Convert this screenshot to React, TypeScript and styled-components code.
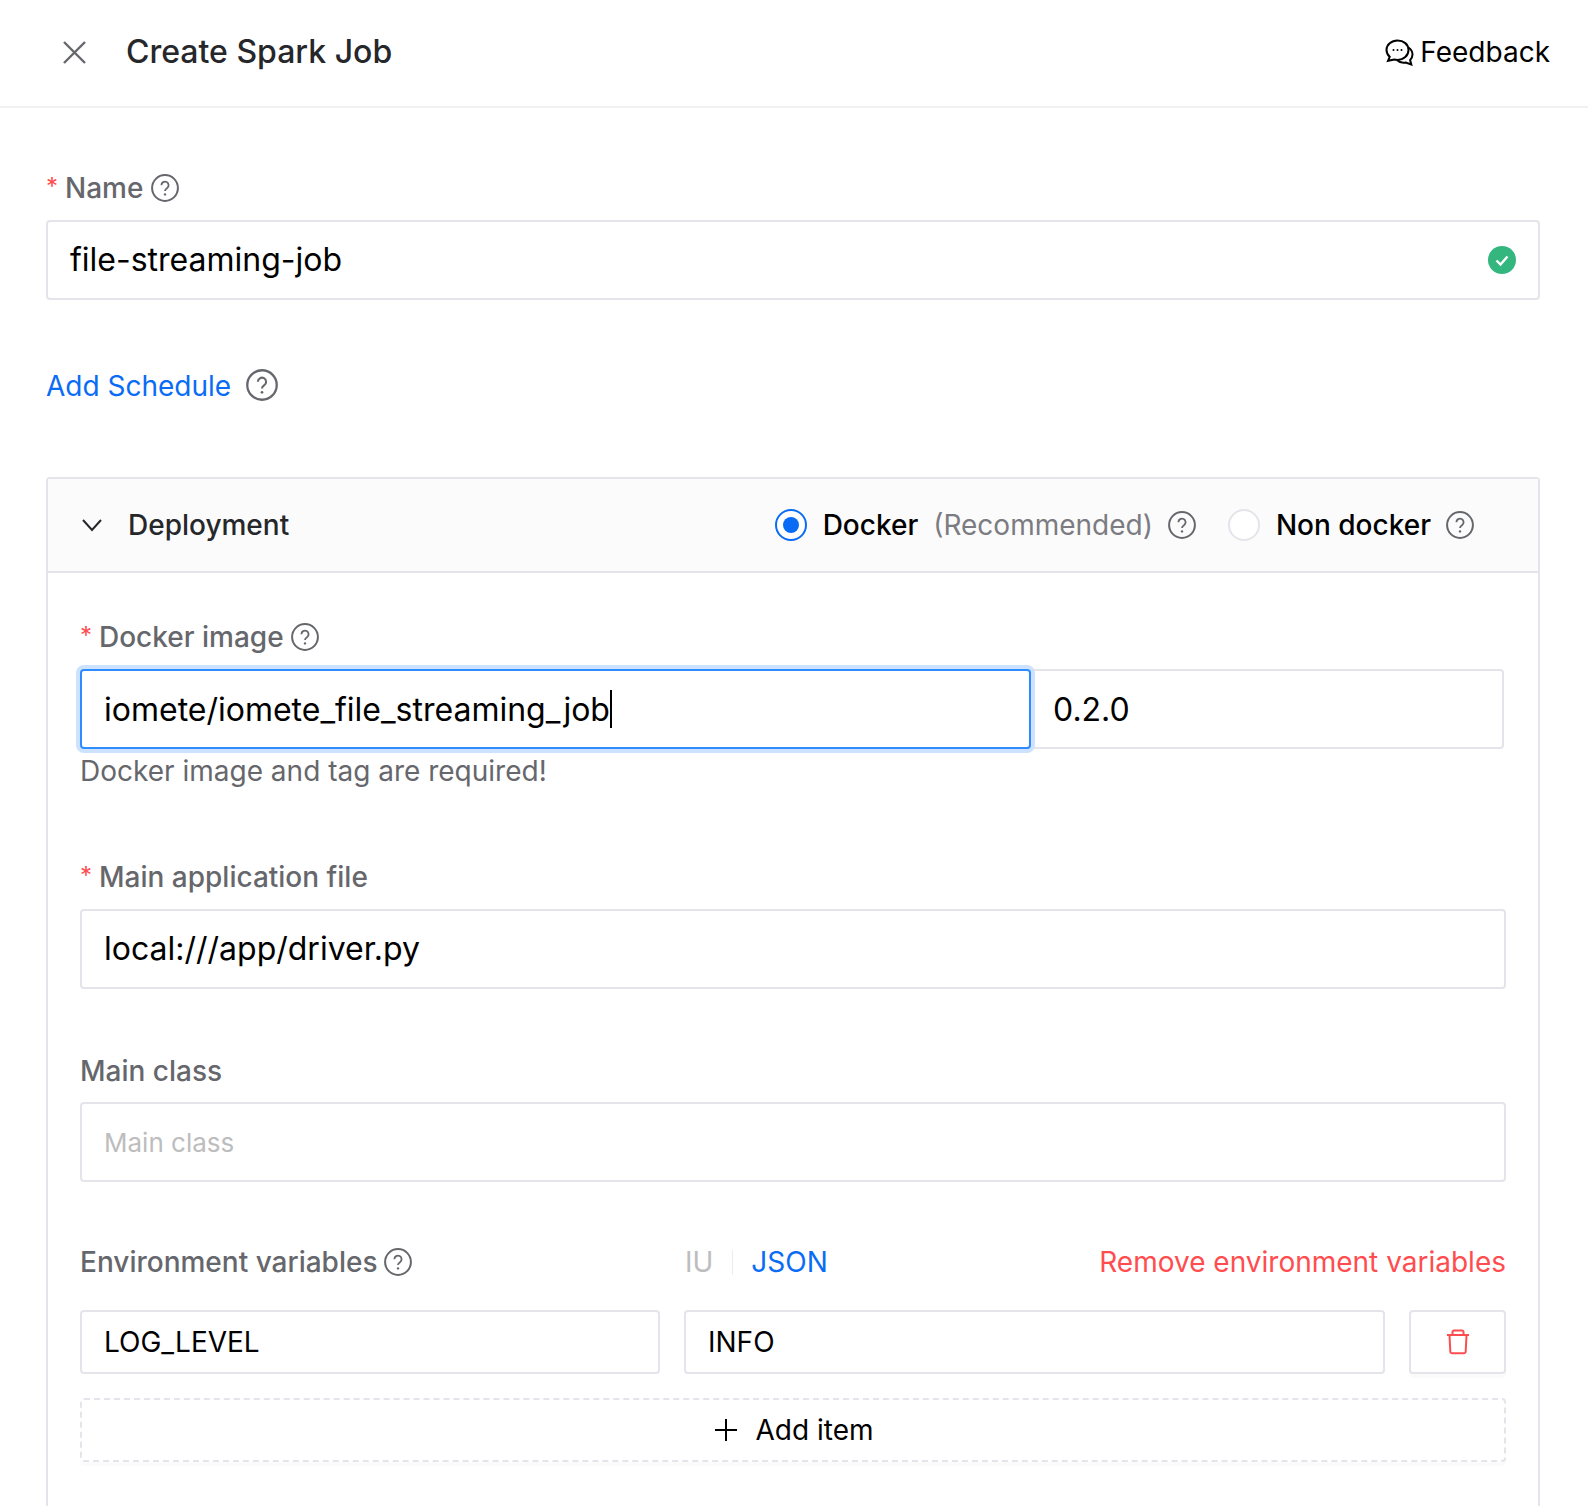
import React from 'react'
import styled, { createGlobalStyle } from 'styled-components'

const GlobalStyle = createGlobalStyle`
  html, body {
    margin: 0;
    padding: 0;
    height: 1506px;
    overflow: hidden;
    background: #fff;
    font-family: Inter, "Liberation Sans", sans-serif;
    color: #000;
  }
`

const TopBar = styled.header`
  display: flex;
  align-items: center;
  height: 104px;
  padding: 0 38px 2px 63px;
  border-bottom: 2px solid #f1f1f3;
`

const CloseIcon = styled.svg`
  width: 23px;
  height: 23px;
  margin-right: 40px;
  color: #66676c;
`

const Title = styled.h1`
  flex: 1;
  margin: 0;
  font-size: 32px;
  line-height: 40px;
  font-weight: 500;
  color: #26272b;
`

const FeedbackLink = styled.div`
  display: flex;
  align-items: center;
  gap: 6px;
  font-size: 28px;
  line-height: 40px;
`

const Form = styled.main`
  padding: 60px 48px 0 46px;
`

const LabelRow = styled.div<{ $mt?: number }>`
  display: flex;
  align-items: center;
  height: 40px;
  margin-top: ${p => p.$mt ?? 0}px;
  font-size: 28px;
  font-weight: 500;
  color: #66676c;
`

const Star = styled.span`
  width: 19px;
  font-size: 24px;
  font-weight: 400;
  color: #ff4d4f;
  position: relative;
  top: -2px;
`

const Help = styled.svg<{ $size?: number; $ml?: number; $up?: boolean }>`
  flex: none;
  width: ${p => p.$size ?? 28}px;
  height: ${p => p.$size ?? 28}px;
  margin-left: ${p => p.$ml ?? 8}px;
  margin-bottom: ${p => (p.$up ? 2 : 0)}px;
  color: #66676c;
`

const TextBox = styled.div<{ $h?: number; $mt?: number; $w?: string; $small?: boolean; $lift?: boolean }>`
  box-sizing: border-box;
  display: flex;
  align-items: center;
  justify-content: space-between;
  width: ${p => p.$w ?? 'auto'};
  height: ${p => p.$h ?? 80}px;
  margin-top: ${p => p.$mt ?? 12}px;
  padding: 0 22px ${p => (p.$lift ? 2 : 0)}px;
  background: #fff;
  border: 2px solid #e4e4ea;
  border-radius: 4px;
  font-size: ${p => (p.$small ? 28 : 32)}px;
  white-space: nowrap;
`

const StatusIcon = styled.svg`
  margin-bottom: -2px;
`

const Placeholder = styled.span`
  font-size: 26px;
  color: #bdbdbd;
`

const LinkText = styled.span`
  color: #0a6cf5;
  font-weight: 400;
`

const ScheduleRow = styled.div`
  display: flex;
  align-items: center;
  height: 40px;
  margin-top: 66px;
  font-size: 28px;
`

const Panel = styled.section`
  margin-top: 71px;
  height: 1100px;
  border: 2px solid #e4e4ea;
  border-radius: 4px;
`

const PanelHeader = styled.div`
  display: flex;
  align-items: center;
  box-sizing: border-box;
  height: 94px;
  padding: 0 0 0 34px;
  background: #fbfbfc;
  border-bottom: 2px solid #e4e4ea;
`

const Chevron = styled.svg`
  width: 20px;
  height: 14px;
  margin-right: 26px;
  color: #26272b;
`

const PanelTitle = styled.div`
  flex: 1;
  font-size: 28px;
  font-weight: 500;
  color: #26272b;
`

const RadioOption = styled.div<{ $mr?: number }>`
  display: flex;
  align-items: center;
  margin-right: ${p => p.$mr ?? 0}px;
  font-size: 28px;
  font-weight: 500;
`

const RadioDot = styled.span<{ $on?: boolean }>`
  box-sizing: border-box;
  display: flex;
  align-items: center;
  justify-content: center;
  width: 32px;
  height: 32px;
  margin-right: 16px;
  background: #fff;
  border: 2px solid ${p => (p.$on ? '#0a6cf5' : '#e4e4ea')};
  border-radius: 50%;

  &::after {
    content: '';
    display: ${p => (p.$on ? 'block' : 'none')};
    width: 16px;
    height: 16px;
    border-radius: 50%;
    background: #0a6cf5;
  }
`

const Muted = styled.span`
  margin-left: 15px;
  font-weight: 400;
  color: #7b7c81;
`

const PanelBody = styled.div`
  padding: 44px 32px 0;
`

const ImageRow = styled.div`
  display: flex;
  margin-top: 12px;
  margin-right: 2px;
`

const ImageInput = styled(TextBox)`
  justify-content: flex-start;
  width: 951px;
  margin-top: 0;
  border-color: #2f8cff;
  box-shadow: 0 0 0 4px #cce2ff;
  position: relative;
  z-index: 1;
`

const TagInput = styled(TextBox)`
  flex: 1;
  margin-top: 0;
  border-left: none;
`

const Caret = styled.span`
  width: 2px;
  height: 38px;
  background: #000;
`

const HintText = styled.div`
  height: 40px;
  margin-top: 2px;
  line-height: 40px;
  font-size: 28px;
  color: #66676c;
`

const EnvHeader = styled(LabelRow)`
  justify-content: space-between;
  margin-top: 60px;
`

const EnvLabel = styled.div`
  display: flex;
  align-items: center;
  width: 605px;
`

const ModeSwitch = styled.div`
  display: flex;
  align-items: center;
  flex: 1;
  font-weight: 400;
`

const ModeOff = styled.span`
  color: #bdbdbd;
`

const ModeDivider = styled.span`
  width: 1px;
  height: 25px;
  margin: 0 18px 0 19px;
  background: #ececef;
`

const RemoveText = styled.span`
  font-weight: 400;
  color: #ff4d4f;
`

const EnvRow = styled.div`
  display: flex;
  gap: 24px;
  margin-top: 28px;
`

const DeleteButton = styled.button`
  box-sizing: border-box;
  display: flex;
  flex: 1;
  align-items: center;
  justify-content: center;
  height: 64px;
  padding: 0;
  background: #fff;
  border: 2px solid #e4e4ea;
  border-radius: 4px;
  box-shadow: 0 4px 0 rgba(0, 0, 0, 0.015);
  color: #ff4d4f;
`

const AddItem = styled.button`
  box-sizing: border-box;
  display: flex;
  align-items: center;
  justify-content: center;
  gap: 18px;
  width: 100%;
  height: 64px;
  margin-top: 24px;
  padding: 0 0 0 3px;
  background: #fff;
  border: 2px dashed #e4e4ea;
  border-radius: 4px;
  box-shadow: 0 4px 0 rgba(0, 0, 0, 0.015);
  font-family: inherit;
  font-size: 28px;
  color: #000;
`

const HelpIcon = ({ size, ml, up }: { size?: number; ml?: number; up?: boolean }) => (
  <Help $size={size} $ml={ml} $up={up} viewBox="0 0 28 28" fill="none">
    <circle cx="14" cy="14" r="12.9" stroke="currentColor" strokeWidth="2" />
    <path d="M10.4 11.2a3.6 3.6 0 1 1 5.6 3c-1.3.9-2 1.5-2 2.9" stroke="currentColor" strokeWidth="1.8" />
    <circle cx="14" cy="20.4" r="1.2" fill="currentColor" />
  </Help>
)

export default function App() {
  return (
    <>
      <GlobalStyle />
      <TopBar>
        <CloseIcon viewBox="0 0 23 23" fill="none">
          <path d="M1 1l21 21M22 1L1 22" stroke="currentColor" strokeWidth="2.4" />
        </CloseIcon>
        <Title>Create Spark Job</Title>
        <FeedbackLink>
          <svg width="29" height="27" viewBox="0 0 29 27" fill="none" stroke="#000" strokeWidth="2">
            <path d="M12.5 1.5C6.4 1.5 1.5 5.7 1.5 11c0 2.7 1.2 5 3.2 6.8L3 21.8l6.2-1.3c1.1.3 2.2.4 3.3.4 6.1 0 11-4.2 11-9.9S18.6 1.5 12.5 1.5z" />
            <path d="M23.4 8.5c2.5 1.6 4.1 4.2 4.1 7 0 2.2-.9 4.1-2.4 5.6l1.2 4.4-5.6-2c-3.2.6-6.4-.2-8.5-2.2" />
            <circle cx="8.5" cy="11" r="1" fill="#000" stroke="none" />
            <circle cx="12.5" cy="11" r="1" fill="#000" stroke="none" />
            <circle cx="16.5" cy="11" r="1" fill="#000" stroke="none" />
          </svg>
          Feedback
        </FeedbackLink>
      </TopBar>
      <Form>
        <LabelRow>
          <Star>*</Star>
          Name
          <HelpIcon />
        </LabelRow>
        <TextBox $lift>
          file-streaming-job
          <StatusIcon width="28" height="28" viewBox="0 0 28 28">
            <circle cx="14" cy="14" r="14" fill="#34b77f" />
            <path d="M8.5 14.5l4 4 7-8" fill="none" stroke="#fff" strokeWidth="2.4" />
          </StatusIcon>
        </TextBox>
        <ScheduleRow>
          <LinkText>Add Schedule</LinkText>
          <HelpIcon size={32} ml={15} up />
        </ScheduleRow>
        <Panel>
          <PanelHeader>
            <Chevron viewBox="0 0 20 14" fill="none">
              <path d="M1 2l9 10 9-10" stroke="currentColor" strokeWidth="2" />
            </Chevron>
            <PanelTitle>Deployment</PanelTitle>
            <RadioOption $mr={32}>
              <RadioDot $on />
              Docker
              <Muted>(Recommended)</Muted>
              <HelpIcon ml={15} />
            </RadioOption>
            <RadioOption $mr={64}>
              <RadioDot />
              Non docker
              <HelpIcon ml={15} />
            </RadioOption>
          </PanelHeader>
          <PanelBody>
            <LabelRow>
              <Star>*</Star>
              Docker image
              <HelpIcon ml={7} />
            </LabelRow>
            <ImageRow>
              <ImageInput>
                iomete/iomete_file_streaming_job
                <Caret />
              </ImageInput>
              <TagInput>0.2.0</TagInput>
            </ImageRow>
            <HintText>Docker image and tag are required!</HintText>
            <LabelRow $mt={66}>
              <Star>*</Star>
              Main application file
            </LabelRow>
            <TextBox $lift>local:///app/driver.py</TextBox>
            <LabelRow $mt={62}>Main class</LabelRow>
            <TextBox $mt={11}>
              <Placeholder>Main class</Placeholder>
            </TextBox>
            <EnvHeader>
              <EnvLabel>
                Environment variables
                <HelpIcon ml={6} />
              </EnvLabel>
              <ModeSwitch>
                <ModeOff>IU</ModeOff>
                <ModeDivider />
                <LinkText>JSON</LinkText>
              </ModeSwitch>
              <RemoveText>Remove environment variables</RemoveText>
            </EnvHeader>
            <EnvRow>
              <TextBox $h={64} $mt={0} $small $w="580px">LOG_LEVEL</TextBox>
              <TextBox $h={64} $mt={0} $small $w="701px">INFO</TextBox>
              <DeleteButton aria-label="Remove item">
                <svg width="24" height="26" viewBox="0 0 24 26" fill="none" stroke="currentColor" strokeWidth="2">
                  <path d="M1 6h22M6.5 6V3A1.5 1.5 0 0 1 8 1.5h8A1.5 1.5 0 0 1 17.5 3v3M3.5 6l.8 16.5a2 2 0 0 0 2 1.8h11.4a2 2 0 0 0 2-1.8L20.5 6" />
                </svg>
              </DeleteButton>
            </EnvRow>
            <AddItem>
              <svg width="22" height="22" viewBox="0 0 22 22" fill="none" stroke="#000" strokeWidth="2">
                <path d="M11 0v22M0 11h22" />
              </svg>
              Add item
            </AddItem>
          </PanelBody>
        </Panel>
      </Form>
    </>
  )
}
